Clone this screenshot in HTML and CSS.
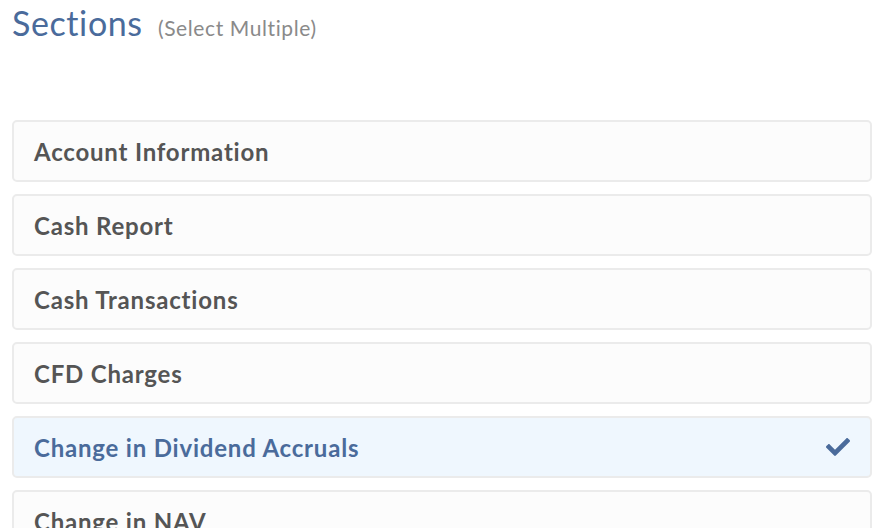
FILE: index.html
```html
<!DOCTYPE html>
<html>
<head>
    <link rel="stylesheet" href="styles.css">
</head>
<body>
    <div class="page">
        <h2 class="title">Sections <span class="hint">(Select Multiple)</span></h2>
        <ul class="sections">
            <li class="item">Account Information</li>
            <li class="item">Cash Report</li>
            <li class="item">Cash Transactions</li>
            <li class="item">CFD Charges</li>
            <li class="item selected">
                Change in Dividend Accruals
                <svg class="check" viewBox="0 0 512 512" width="24" height="24">
                    <path d="M173.898 439.404l-166.4-166.4c-9.997-9.997-9.997-26.206 0-36.204l36.203-36.204c9.997-9.998 26.207-9.998 36.204 0L192 312.69 432.095 72.596c9.997-9.997 26.207-9.997 36.204 0l36.203 36.204c9.997 9.997 9.997 26.206 0 36.204l-294.4 294.401c-9.998 9.997-26.207 9.997-36.204-.001z"/>
                </svg>
            </li>
            <li class="item">Change in NAV</li>
        </ul>
    </div>
</body>
</html>
```

FILE: styles.css
```css
body {
    margin: 0;
    background: #fff;
    font-family: Lato, "Open Sans", sans-serif;
}
.page {
    padding: 0 16px 0 12px;
}
.title {
    margin: 0;
    padding-top: 3px;
    font-size: 34px;
    font-weight: 400;
    letter-spacing: 0.6px;
    color: #4a6b9b;
    line-height: 40px;
}
.hint {
    font-size: 21px;
    letter-spacing: 0.6px;
    color: #8a8a8a;
    margin-left: 6px;
}
.sections {
    list-style: none;
    margin: 72px 0 0 0;
    padding: 0;
    display: flex;
    flex-direction: column;
    gap: 12px;
}
.item {
    display: flex;
    align-items: center;
    justify-content: space-between;
    height: 58px;
    padding: 0 20px 0 20px;
    border: 2px solid #ebebeb;
    border-radius: 5px;
    background: #fcfcfc;
    font-size: 24px;
    font-weight: 700;
    letter-spacing: 0.8px;
    color: #555;
}
.selected {
    background: #eff7fe;
    color: #4a6b9b;
}
.check {
    fill: #4a6b9b;
}
```
